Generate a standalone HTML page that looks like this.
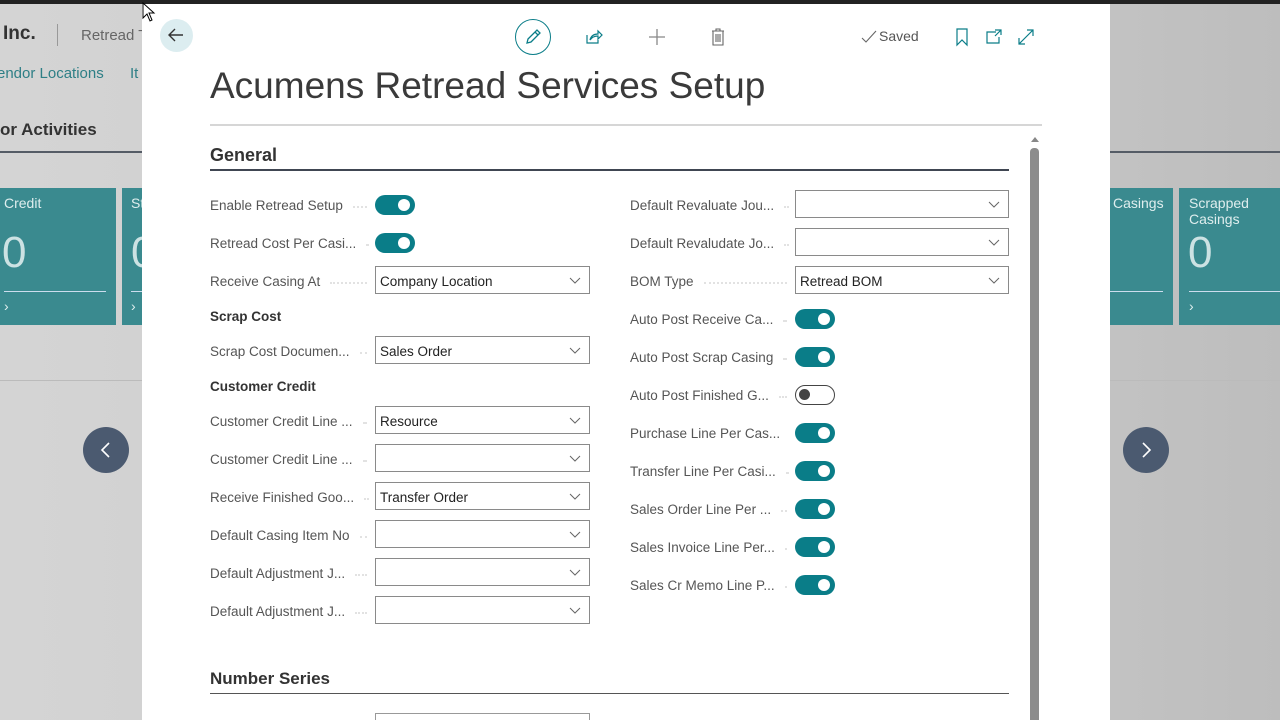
<!DOCTYPE html>
<html><head><meta charset="utf-8"><style>
*{margin:0;padding:0;box-sizing:border-box}
html,body{width:1280px;height:720px;overflow:hidden}
body{position:relative;font-family:"Segoe UI","Liberation Sans",sans-serif;background:linear-gradient(90deg,#d4d4d4 0%,#c9c9c9 70%,#bdbdbd 100%)}
.a{position:absolute}
.topbar{left:0;top:0;width:1280px;height:4px;background:#222}
.tile{background:#3a8a8f;color:#dfeeee}
.dlg{left:142px;top:4px;width:968px;height:716px;background:#fff}
.lbl{position:absolute;display:flex;align-items:center;font-size:13.5px;color:#555;height:20px}
.lbl span{white-space:nowrap}
.lbl i{flex:1;border-bottom:2px dotted #e2e2e2;margin:0 8px 0 10px;height:1px;margin-top:4px}
.fld{position:absolute;height:28px;border:1px solid #8a8a8a;background:#fff;font-size:13.5px;color:#222;padding-left:4px;line-height:29px}
.fld svg{position:absolute;right:8px;top:10px}
.tg{position:absolute;width:40px;height:20px;border-radius:10px;background:#0a7d88}
.tg:after{content:"";position:absolute;right:5px;top:4px;width:12px;height:12px;border-radius:50%;background:#fff}
.tg.off{background:#fff;border:1.5px solid #444}
.tg.off:after{left:3px;top:3px;background:#444;right:auto;width:11px;height:11px}
.sub{position:absolute;font-size:13.5px;font-weight:600;color:#333}
.zero{font-weight:300;color:#e6f2f2;opacity:.85}
</style></head><body>
<div class="a topbar"></div>
<div class="a" style="left:3px;top:23px;font-size:19px;font-weight:600;color:#333">Inc.</div>
<div class="a" style="left:57px;top:24px;width:1px;height:22px;background:#999"></div>
<div class="a" style="left:81px;top:27px;font-size:15px;color:#666">Retread T</div>
<div class="a" style="left:-3px;top:65px;font-size:15px;color:#2e7f86">endor Locations</div>
<div class="a" style="left:130px;top:65px;font-size:15px;color:#2e7f86">It</div>
<div class="a" style="left:0;top:120px;font-size:17px;font-weight:600;color:#333">or Activities</div>
<div class="a" style="left:0;top:151px;width:142px;height:2px;background:#555c66"></div>
<div class="a tile" style="left:0;top:188px;width:116px;height:137px">
 <div class="a" style="left:4px;top:7px;font-size:14px">Credit</div>
 <div class="a zero" style="left:2px;top:40px;font-size:44px">0</div>
 <div class="a" style="left:4px;top:103px;width:102px;height:1px;background:#cde"></div>
 <div class="a" style="left:4px;top:110px;font-size:14px">›</div>
</div>
<div class="a tile" style="left:122px;top:188px;width:20px;height:137px">
 <div class="a" style="left:9px;top:7px;font-size:14px">St</div>
 <div class="a zero" style="left:9px;top:40px;font-size:44px">0</div>
 <div class="a" style="left:9px;top:103px;width:11px;height:1px;background:#cde"></div>
 <div class="a" style="left:9px;top:110px;font-size:14px">›</div>
</div>
<div class="a" style="left:0;top:380px;width:142px;height:1px;background:#bbb"></div>
<div class="a" style="left:83px;top:427px;width:46px;height:46px;border-radius:50%;background:#4b5a70"></div>
<svg class="a" style="left:96px;top:440px" width="20" height="20"><path d="M13 3 L6 10 L13 17" stroke="#fff" stroke-width="1.6" fill="none"/></svg>
<div class="a" style="left:1110px;top:151px;width:170px;height:2px;background:#555c66"></div>
<div class="a tile" style="left:1110px;top:188px;width:63px;height:137px;overflow:hidden">
 <div class="a" style="left:-4px;top:7px;font-size:14px;white-space:nowrap">l Casings</div>
 <div class="a" style="left:0;top:103px;width:53px;height:1px;background:#cde"></div>
</div>
<div class="a tile" style="left:1179px;top:188px;width:101px;height:137px">
 <div class="a" style="left:10px;top:7px;font-size:14px;line-height:16px">Scrapped<br>Casings</div>
 <div class="a zero" style="left:9px;top:40px;font-size:44px">0</div>
 <div class="a" style="left:10px;top:103px;width:91px;height:1px;background:#cde"></div>
 <div class="a" style="left:10px;top:110px;font-size:14px">›</div>
</div>
<div class="a" style="left:1110px;top:380px;width:170px;height:1px;background:#bbb"></div>
<div class="a" style="left:1123px;top:427px;width:46px;height:46px;border-radius:50%;background:#4b5a70"></div>
<svg class="a" style="left:1136px;top:440px" width="20" height="20"><path d="M7 3 L14 10 L7 17" stroke="#fff" stroke-width="1.6" fill="none"/></svg>

<div class="a dlg"></div>
<div class="a" style="left:160px;top:19px;width:33px;height:33px;border-radius:50%;background:#dcedf0"></div>
<svg class="a" style="left:166px;top:25px" width="20" height="20"><path d="M17 10 H3 M9 4 L3 10 L9 16" stroke="#333" stroke-width="1.4" fill="none"/></svg>
<div class="a" style="left:515px;top:19px;width:36px;height:36px;border-radius:50%;border:1.5px solid #0a7d88"></div>
<svg class="a" style="left:523px;top:27px" width="20" height="20"><path d="M4 16 L5 12 L14 3 L17 6 L8 15 Z M12 5 L15 8" stroke="#0a7d88" stroke-width="1.3" fill="none"/></svg>
<svg class="a" style="left:584px;top:27px" width="20" height="20"><path d="M3 8 V16 H14 V13 M6 13 C7 9 10 7 14 7 V4 L18 8 L14 12 V9 C11 9 8 10 6 13" stroke="#0a7d88" stroke-width="1.2" fill="none"/></svg>
<svg class="a" style="left:647px;top:27px" width="20" height="20"><path d="M10 2 V18 M2 10 H18" stroke="#888" stroke-width="1.3"/></svg>
<svg class="a" style="left:708px;top:27px" width="20" height="20"><path d="M4 4 H16 M8 4 V2 H12 V4 M5 4 V18 H15 V4 M8 7 V15 M10 7 V15 M12 7 V15" stroke="#666" stroke-width="1.1" fill="none"/></svg>
<svg class="a" style="left:861px;top:30px" width="16" height="14"><path d="M1 8 L5 12 L15 1" stroke="#666" stroke-width="1.1" fill="none"/></svg>
<div class="a" style="left:879px;top:28px;font-size:14px;color:#555">Saved</div>
<svg class="a" style="left:953px;top:27px" width="18" height="20"><path d="M4 2 H14 V18 L9 13 L4 18 Z" stroke="#0a7d88" stroke-width="1.2" fill="none"/></svg>
<svg class="a" style="left:984px;top:27px" width="20" height="20"><path d="M12 5 H3 V16 H15 V10 M11 3 H17 V8 M17 3 L11 9" stroke="#0a7d88" stroke-width="1.2" fill="none"/></svg>
<svg class="a" style="left:1016px;top:27px" width="20" height="20"><path d="M3 17 L17 3 M11 3 H17 V9 M3 11 V17 H9" stroke="#0a7d88" stroke-width="1.2" fill="none"/></svg>

<div class="a" style="left:210px;top:65px;font-size:37px;font-weight:300;color:#3a3a3a;white-space:nowrap">Acumens Retread Services Setup</div>
<div class="a" style="left:210px;top:124px;width:832px;height:2px;background:#d6d6d6"></div>
<svg class="a" style="left:1030px;top:135px" width="10" height="8"><path d="M1 7 L5 2 L9 7 Z" fill="#888"/></svg>
<div class="a" style="left:1030px;top:148px;width:9px;height:572px;border-radius:4px 4px 0 0;background:#8c8c8c"></div>

<div class="a" style="left:210px;top:145px;font-size:18px;font-weight:600;color:#333">General</div>
<div class="a" style="left:210px;top:169px;width:799px;height:2px;background:#404652"></div>

<div class="lbl" style="left:210px;top:195px;width:165px"><span>Enable Retread Setup</span><i></i></div><div class="tg" style="left:375px;top:195px"></div>
<div class="lbl" style="left:210px;top:233px;width:165px"><span>Retread Cost Per Casi...</span><i></i></div><div class="tg" style="left:375px;top:233px"></div>
<div class="lbl" style="left:210px;top:271px;width:165px"><span>Receive Casing At</span><i></i></div><div class="fld" style="left:375px;top:266px;width:215px">Company Location<svg width="12" height="8"><path d="M1 1 L6 6 L11 1" stroke="#666" fill="none"/></svg></div>
<div class="sub" style="left:210px;top:309px">Scrap Cost</div>
<div class="lbl" style="left:210px;top:341px;width:165px"><span>Scrap Cost Documen...</span><i></i></div><div class="fld" style="left:375px;top:336px;width:215px">Sales Order<svg width="12" height="8"><path d="M1 1 L6 6 L11 1" stroke="#666" fill="none"/></svg></div>
<div class="sub" style="left:210px;top:379px">Customer Credit</div>
<div class="lbl" style="left:210px;top:411px;width:165px"><span>Customer Credit Line ...</span><i></i></div><div class="fld" style="left:375px;top:406px;width:215px">Resource<svg width="12" height="8"><path d="M1 1 L6 6 L11 1" stroke="#666" fill="none"/></svg></div>
<div class="lbl" style="left:210px;top:449px;width:165px"><span>Customer Credit Line ...</span><i></i></div><div class="fld" style="left:375px;top:444px;width:215px"><svg width="12" height="8"><path d="M1 1 L6 6 L11 1" stroke="#666" fill="none"/></svg></div>
<div class="lbl" style="left:210px;top:487px;width:165px"><span>Receive Finished Goo...</span><i></i></div><div class="fld" style="left:375px;top:482px;width:215px">Transfer Order<svg width="12" height="8"><path d="M1 1 L6 6 L11 1" stroke="#666" fill="none"/></svg></div>
<div class="lbl" style="left:210px;top:525px;width:165px"><span>Default Casing Item No</span><i></i></div><div class="fld" style="left:375px;top:520px;width:215px"><svg width="12" height="8"><path d="M1 1 L6 6 L11 1" stroke="#666" fill="none"/></svg></div>
<div class="lbl" style="left:210px;top:563px;width:165px"><span>Default Adjustment J...</span><i></i></div><div class="fld" style="left:375px;top:558px;width:215px"><svg width="12" height="8"><path d="M1 1 L6 6 L11 1" stroke="#666" fill="none"/></svg></div>
<div class="lbl" style="left:210px;top:601px;width:165px"><span>Default Adjustment J...</span><i></i></div><div class="fld" style="left:375px;top:596px;width:215px"><svg width="12" height="8"><path d="M1 1 L6 6 L11 1" stroke="#666" fill="none"/></svg></div>

<div class="lbl" style="left:630px;top:195px;width:165px"><span>Default Revaluate Jou...</span><i></i></div><div class="fld" style="left:795px;top:190px;width:214px"><svg width="12" height="8"><path d="M1 1 L6 6 L11 1" stroke="#666" fill="none"/></svg></div>
<div class="lbl" style="left:630px;top:233px;width:165px"><span>Default Revaludate Jo...</span><i></i></div><div class="fld" style="left:795px;top:228px;width:214px"><svg width="12" height="8"><path d="M1 1 L6 6 L11 1" stroke="#666" fill="none"/></svg></div>
<div class="lbl" style="left:630px;top:271px;width:165px"><span>BOM Type</span><i></i></div><div class="fld" style="left:795px;top:266px;width:214px">Retread BOM<svg width="12" height="8"><path d="M1 1 L6 6 L11 1" stroke="#666" fill="none"/></svg></div>
<div class="lbl" style="left:630px;top:309px;width:165px"><span>Auto Post Receive Ca...</span><i></i></div><div class="tg" style="left:795px;top:309px"></div>
<div class="lbl" style="left:630px;top:347px;width:165px"><span>Auto Post Scrap Casing</span><i></i></div><div class="tg" style="left:795px;top:347px"></div>
<div class="lbl" style="left:630px;top:385px;width:165px"><span>Auto Post Finished G...</span><i></i></div><div class="tg off" style="left:795px;top:385px"></div>
<div class="lbl" style="left:630px;top:423px;width:165px"><span>Purchase Line Per Cas...</span><i></i></div><div class="tg" style="left:795px;top:423px"></div>
<div class="lbl" style="left:630px;top:461px;width:165px"><span>Transfer Line Per Casi...</span><i></i></div><div class="tg" style="left:795px;top:461px"></div>
<div class="lbl" style="left:630px;top:499px;width:165px"><span>Sales Order Line Per ...</span><i></i></div><div class="tg" style="left:795px;top:499px"></div>
<div class="lbl" style="left:630px;top:537px;width:165px"><span>Sales Invoice Line Per...</span><i></i></div><div class="tg" style="left:795px;top:537px"></div>
<div class="lbl" style="left:630px;top:575px;width:165px"><span>Sales Cr Memo Line P...</span><i></i></div><div class="tg" style="left:795px;top:575px"></div>

<div class="a" style="left:210px;top:669px;font-size:17px;font-weight:600;color:#333">Number Series</div>
<div class="a" style="left:210px;top:693px;width:799px;height:1px;background:#555"></div>
<div class="a" style="left:375px;top:713px;width:215px;height:7px;border:1px solid #999;border-bottom:none"></div>

<svg class="a" style="left:142px;top:2px" width="16" height="22"><path d="M1 1 V16 L5 12 L8 19 L10 18 L7 11 H12 Z" fill="#fff" stroke="#000" stroke-width="1"/></svg>
</body></html>
